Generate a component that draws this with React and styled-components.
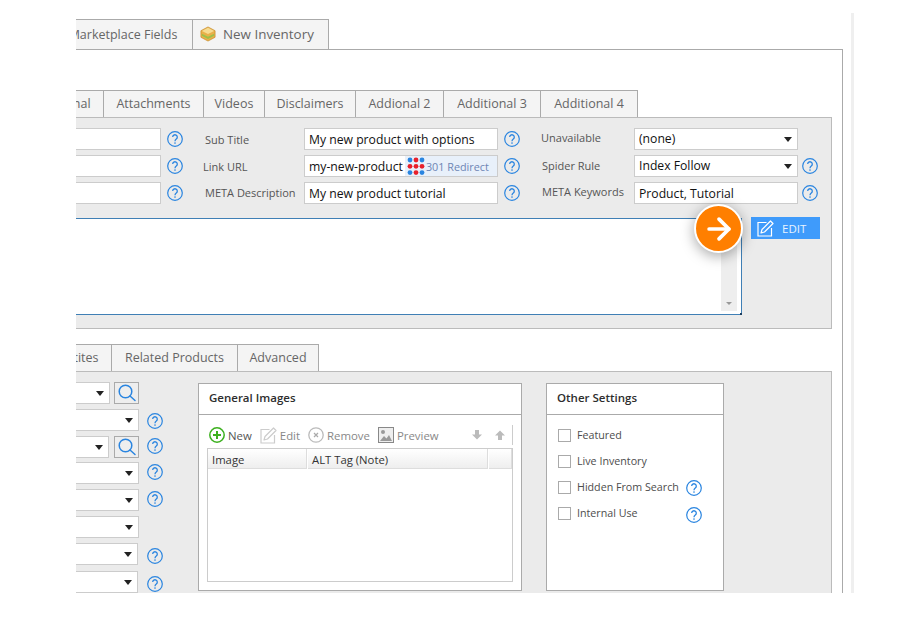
import React from 'react';
import styled, { createGlobalStyle } from 'styled-components';
import { ArrowRight } from 'lucide-react';

const GlobalStyle = createGlobalStyle`
    html, body {
        margin: 0;
        background: #fff;
    }
    body {
        font-family: "Open Sans", "Noto Sans", sans-serif;
        font-size: 12px;
    }
`;

const Page = styled.div`
    width: 900px;
    height: 620px;
    overflow: hidden;
`;

const Viewport = styled.div`
    display: flex;
    width: 778px;
    height: 593px;
    margin-left: 76px;
    overflow: hidden;
`;

const Main = styled.div`
    display: flex;
    flex-direction: column;
    flex: none;
    width: 767px;
    padding-top: 19px;
    box-sizing: border-box;
`;

const SideStrip = styled.div`
    flex: none;
    width: 3px;
    margin: 13px 0 0 8px;
    background: #efefef;
`;

const TabStrip = styled.div`
    display: flex;
    flex: none;
    height: ${p => p.$height}px;
    margin-left: ${p => p.$shift}px;
    margin-top: ${p => p.$top || 0}px;
`;

const Tab = styled.div`
    display: flex;
    align-items: center;
    justify-content: center;
    flex: none;
    width: ${p => p.$w}px;
    box-sizing: border-box;
    background: #f4f4f4;
    border-top: 1px solid #aaa;
    border-left: 1px solid #aaa;
    border-right: ${p => (p.$last ? '1px solid #aaa' : 'none')};
    color: #666;
    font-size: 12.5px;
    white-space: nowrap;
`;

const InnerTab = styled(Tab)`
    padding-bottom: 2px;
`;

const MarketplaceTab = styled(Tab)`
    padding-left: 2px;
`;

const InventoryTab = styled(Tab)`
    justify-content: flex-start;
    gap: 7px;
    padding: 0 0 2px 7px;
    font-size: 13.4px;
`;

const Body = styled.div`
    flex: 1;
    min-height: 0;
    padding-right: 10px;
    border-top: 1px solid #aaa;
    border-right: 1px solid #aaa;
`;

const Section = styled.div`
    margin-left: -10px;
`;

const Panel = styled.div`
    background: #ebebeb;
    border: 1px solid #bbb;
    padding: 10px 0 13px;
`;

const FormGrid = styled.div`
    display: grid;
    grid-template-columns: 94px 22px 121px 194px 22px 114px 164px 20px;
    grid-auto-rows: 22px;
    row-gap: 5px;
    align-items: center;
`;

const Label = styled.div`
    padding-left: ${p => p.$indent}px;
    margin-bottom: ${p => p.$up || 0}px;
    color: #555;
    font-size: 11px;
    white-space: nowrap;
`;

const Input = styled.div`
    display: flex;
    align-items: center;
    height: 22px;
    box-sizing: border-box;
    padding-left: 4px;
    background: #fff;
    border: 1px solid #ccc;
    color: #111;
    font-size: 12.2px;
    white-space: nowrap;
    overflow: hidden;
`;

const RedirectBadge = styled.div`
    display: flex;
    align-items: center;
    align-self: stretch;
    margin-left: 2px;
    padding-left: 2px;
    flex: 1;
    gap: 1px;
    background: #e8f0fa;
    color: #6e86b5;
    font-size: 10.8px;
`;

const SelectBox = styled.div`
    display: flex;
    align-items: center;
    justify-content: space-between;
    height: 22px;
    width: ${p => (p.$w ? `${p.$w}px` : 'auto')};
    box-sizing: border-box;
    padding: 0 5px 2px 4px;
    background: #fff;
    border: 1px solid #ccc;
    color: #111;
    font-size: 12.2px;
    white-space: nowrap;
`;

const Caret = styled.span`
    flex: none;
    width: 0;
    height: 0;
    margin-top: 2px;
    border-left: 4px solid transparent;
    border-right: 4px solid transparent;
    border-top: 5px solid #222;
`;

const HelpWrap = styled.span`
    display: flex;
    justify-self: end;
    margin-top: ${p => p.$drop || 0}px;
    margin-bottom: ${p => p.$lift || 0}px;
`;

const EditorRow = styled.div`
    display: flex;
    align-items: flex-start;
    margin-top: 14px;
`;

const Editor = styled.div`
    position: relative;
    display: flex;
    justify-content: flex-end;
    flex: none;
    width: 675px;
    height: 97px;
    box-sizing: border-box;
    padding: 1px 4px 3px 0;
    background: #fff;
    border: 1px solid #3f7fb5;

    &::after {
        content: '';
        position: absolute;
        right: -1px;
        bottom: -1px;
        width: 2px;
        height: 2px;
        background: #1c3f60;
    }
`;

const ScrollBar = styled.div`
    display: flex;
    align-items: flex-end;
    justify-content: center;
    width: 16px;
    padding-bottom: 6px;
    box-sizing: border-box;
    background: #eee;
`;

const ScrollArrow = styled.span`
    width: 0;
    height: 0;
    border-left: 3px solid transparent;
    border-right: 3px solid transparent;
    border-top: 3px solid #999;
`;

const GoBadge = styled.div`
    position: absolute;
    top: -15px;
    right: -2px;
    display: flex;
    align-items: center;
    justify-content: center;
    width: 49px;
    height: 49px;
    box-sizing: border-box;
    border: 2px solid #fff;
    border-radius: 50%;
    background: #ff7f00;
    color: #fff;
    box-shadow: 0 3px 14px rgba(0, 0, 0, 0.35);
`;

const EditButton = styled.div`
    display: flex;
    align-items: center;
    gap: 8px;
    width: 69px;
    height: 22px;
    box-sizing: border-box;
    margin: -1px 0 0 9px;
    padding-left: 6px;
    background: #3f9bfb;
    color: #e8f3ff;
    font-size: 11.5px;
`;

const BottomRow = styled.div`
    display: flex;
    align-items: flex-start;
`;

const LeftColumn = styled.div`
    flex: none;
    width: 96px;
`;

const LeftRow = styled.div`
    display: grid;
    grid-template-columns: 72px 24px;
    align-items: center;
    height: 22px;
    margin-top: ${p => p.$gap}px;
`;

const SelectCell = styled.div`
    display: flex;
    justify-content: space-between;
`;

const SearchButton = styled.div`
    display: flex;
    align-items: center;
    justify-content: center;
    width: 25px;
    height: 22px;
    box-sizing: border-box;
    background: #eee;
    border: 1px solid #aaa;
`;

const Card = styled.div`
    flex: none;
    width: ${p => p.$w}px;
    height: 208px;
    box-sizing: border-box;
    margin: 1px 0 0 ${p => p.$left}px;
    background: #fff;
    border: 1px solid #aaa;
`;

const CardTitle = styled.div`
    display: flex;
    align-items: center;
    height: 31px;
    box-sizing: border-box;
    padding: 0 0 3px 10px;
    border-bottom: 1px solid #aaa;
    color: #2d2d2d;
    font-size: 11.5px;
    font-weight: 600;
`;

const CardBody = styled.div`
    padding: 10px 8px 0;
`;

const Toolbar = styled.div`
    display: flex;
    align-items: center;
    gap: 8px;
    height: 20px;
    width: 306px;
    margin-bottom: 3px;
    padding-left: 2px;
    box-sizing: border-box;
    border-right: 1px solid #ccc;
`;

const Tool = styled.div`
    display: flex;
    align-items: center;
    gap: 3px;
    color: ${p => (p.$on ? '#555' : '#888')};
    font-size: 11.4px;
`;

const MoveButtons = styled.div`
    display: flex;
    gap: 13px;
    margin-left: auto;
    margin-right: 7px;
`;

const ImageGrid = styled.div`
    width: 306px;
    height: 134px;
    box-sizing: border-box;
    border: 1px solid #ccc;
`;

const GridHead = styled.div`
    display: grid;
    grid-template-columns: 99px 180px 23px;
    column-gap: 1px;
    height: 20px;
`;

const GridCell = styled.div`
    display: flex;
    align-items: center;
    padding: 2px 0 0 4px;
    background: linear-gradient(#fff, #eee);
    border-bottom: 1px solid #ddd;
    border-right: 1px solid #ddd;
    color: #333;
    font-size: 11.3px;
`;

const CheckList = styled.div`
    display: grid;
    grid-auto-rows: 13px;
    row-gap: 13px;
    padding: 14px 21px 0 11px;
`;

const CheckRow = styled.div`
    display: grid;
    grid-template-columns: 13px minmax(0, 1fr) 16px;
    grid-template-rows: 13px;
    column-gap: 6px;
    align-items: center;
    color: #4d4d4d;
    font-size: 10.7px;
    white-space: nowrap;
`;

const CheckLabel = styled.span`
    margin-top: ${p => p.$nudge || 0}px;
    margin-bottom: 1px;
`;

const CheckBox = styled.span`
    width: 13px;
    height: 13px;
    box-sizing: border-box;
    background: #fff;
    border: 1px solid #aaa;
`;

const HelpIcon = () => (
    <svg width="16" height="16" viewBox="0 0 16 16" fill="none" stroke="#2a85e0">
        <circle cx="8" cy="8" r="7.3" strokeWidth="1.2" />
        <path d="M5.7 6.1a2.3 2.3 0 1 1 3.6 1.9C8.5 8.6 8 9 8 10.2" strokeWidth="1.3" />
        <circle cx="8" cy="12.1" r="0.8" fill="#2a85e0" stroke="none" />
    </svg>
);

const BoxIcon = () => (
    <svg width="16" height="16" viewBox="0 0 17 17">
        <path d="M8.5 1 16 5v7l-7.5 4L1 12V5z" fill="#e9b04a" stroke="#c98f2c" strokeWidth="0.8" />
        <path d="M8.5 1.8 15 5.2 8.5 8.6 2 5.2z" fill="#f7dc92" />
        <path d="M2 8.2l6.5 3.3L15 8.2v2.2l-6.5 3.3L2 10.4z" fill="#9cc04a" />
    </svg>
);

const DotsIcon = () => {
    const colors = ['#2a85e0', '#e8202a', '#2a85e0', '#e8202a', '#e8202a', '#e8202a', '#2a85e0', '#e8202a', '#2a85e0'];
    return (
        <svg width="18" height="18" viewBox="0 0 18 18">
            {colors.map((c, i) => (
                <circle key={i} cx={3 + (i % 3) * 6} cy={3 + Math.floor(i / 3) * 6.3} r="2.4" fill={c} />
            ))}
        </svg>
    );
};

const SearchIcon = () => (
    <svg width="20" height="20" viewBox="0 0 20 20" fill="none" stroke="#2a85e0" strokeWidth="1.5">
        <circle cx="8.5" cy="8.5" r="6.3" />
        <path d="M13 13l5 4.5" strokeLinecap="round" />
    </svg>
);

const NewIcon = () => (
    <svg width="16" height="16" viewBox="0 0 16 16" fill="none" stroke="#3cb01e">
        <circle cx="8" cy="8" r="7.2" strokeWidth="1.5" />
        <path d="M8 4v8M4 8h8" strokeWidth="2" />
    </svg>
);

const PenIcon = ({ color }) => (
    <svg width="17" height="17" viewBox="0 0 17 17" fill="none" stroke={color} strokeWidth="1.2">
        <path d="M9.5 2.5H1v13.5h13.5V8" />
        <path d="M13.5 1 16 3.5 7.5 12l-3.5 1 1-3.5z" strokeLinejoin="round" />
    </svg>
);

const RemoveIcon = () => (
    <svg width="16" height="16" viewBox="0 0 16 16" fill="none" stroke="#bbb">
        <circle cx="8" cy="8" r="7.2" strokeWidth="1.3" />
        <path d="M6 6l4 4M10 6l-4 4" stroke="#aaa" strokeWidth="1.2" />
    </svg>
);

const PreviewIcon = () => (
    <svg width="16" height="16" viewBox="0 0 16 16">
        <rect x="0.5" y="0.5" width="15" height="15" fill="#eee" stroke="#888" />
        <circle cx="5" cy="5" r="2" fill="#999" />
        <path d="M2 14l4-5 2.5 2.5L11 8l3 6z" fill="#999" />
    </svg>
);

const MoveIcon = ({ up }) => (
    <svg width="10" height="10" viewBox="0 0 10 10" fill="#bbb">
        <path d={up ? 'M5 0.5 10 5.5H7V10H3V5.5H0z' : 'M5 9.5 10 4.5H7V0H3V4.5H0z'} />
    </svg>
);

const formRows = [
    { a: 22, la: 'Sub Title', b: 21, lb: 'Unavailable', upB: 4, value: 'My new product with options', select: '(none)' },
    { a: 20, la: 'Link URL', b: 22, lb: 'Spider Rule', upB: 2, value: 'my-new-product', select: 'Index Follow', help: true, redirect: true },
    { a: 22, la: 'META Description', upA: 2, b: 22, lb: 'META Keywords', upB: 4, value: 'My new product tutorial', text: 'Product, Tutorial', help: true },
];

const leftRows = [
    { gap: 0, w: 43, search: true },
    { gap: 5, w: 72, help: true, drop: 2 },
    { gap: 5, w: 42, search: true, help: true, lift: 2 },
    { gap: 4, w: 72, help: true, lift: 2 },
    { gap: 5, w: 72, help: true, lift: 2 },
    { gap: 5, w: 72 },
    { gap: 5, w: 71, help: true, drop: 4 },
    { gap: 6, w: 71, help: true, drop: 4 },
];

const App = () => (
    <Page>
        <GlobalStyle />
        <Viewport>
            <Main>
                <TabStrip $height={30} $shift={-25}>
                    <MarketplaceTab $w={141}>Marketplace Fields</MarketplaceTab>
                    <InventoryTab $w={137} $last>
                        <BoxIcon />
                        New Inventory
                    </InventoryTab>
                </TabStrip>
                <Body>
                    <TabStrip $height={27} $shift={-58} $top={40}>
                        <InnerTab $w={85}>Additional</InnerTab>
                        <InnerTab $w={100}>Attachments</InnerTab>
                        <InnerTab $w={61}>Videos</InnerTab>
                        <InnerTab $w={91}>Disclaimers</InnerTab>
                        <InnerTab $w={88}>Addional 2</InnerTab>
                        <InnerTab $w={97}>Additional 3</InnerTab>
                        <InnerTab $w={98} $last>Additional 4</InnerTab>
                    </TabStrip>
                    <Section>
                        <Panel>
                            <FormGrid>
                                {formRows.map(row => (
                                    <React.Fragment key={row.la}>
                                        <Input />
                                        <HelpWrap><HelpIcon /></HelpWrap>
                                        <Label $indent={row.a} $up={row.upA}>{row.la}</Label>
                                        <Input>
                                            {row.value}
                                            {row.redirect && (
                                                <RedirectBadge>
                                                    <DotsIcon />
                                                    301 Redirect
                                                </RedirectBadge>
                                            )}
                                        </Input>
                                        <HelpWrap><HelpIcon /></HelpWrap>
                                        <Label $indent={row.b} $up={row.upB}>{row.lb}</Label>
                                        {row.text ? (
                                            <Input>{row.text}</Input>
                                        ) : (
                                            <SelectBox>
                                                {row.select}
                                                <Caret />
                                            </SelectBox>
                                        )}
                                        {row.help ? <HelpWrap><HelpIcon /></HelpWrap> : <span />}
                                    </React.Fragment>
                                ))}
                            </FormGrid>
                            <EditorRow>
                                <Editor>
                                    <ScrollBar><ScrollArrow /></ScrollBar>
                                    <GoBadge><ArrowRight size={34} strokeWidth={2.6} /></GoBadge>
                                </Editor>
                                <EditButton>
                                    <PenIcon color="#fff" />
                                    EDIT
                                </EditButton>
                            </EditorRow>
                        </Panel>
                    </Section>
                    <TabStrip $height={27} $shift={-48} $top={15}>
                        <InnerTab $w={83}>Quantites</InnerTab>
                        <InnerTab $w={126}>Related Products</InnerTab>
                        <InnerTab $w={82} $last>Advanced</InnerTab>
                    </TabStrip>
                    <Section>
                        <Panel>
                            <BottomRow>
                                <LeftColumn>
                                    {leftRows.map((row, i) => (
                                        <LeftRow key={i} $gap={row.gap}>
                                            <SelectCell>
                                                <SelectBox $w={row.w}><span /><Caret /></SelectBox>
                                                {row.search && <SearchButton><SearchIcon /></SearchButton>}
                                            </SelectCell>
                                            {row.help ? <HelpWrap $drop={row.drop} $lift={row.lift}><HelpIcon /></HelpWrap> : <span />}
                                        </LeftRow>
                                    ))}
                                </LeftColumn>
                                <Card $w={324} $left={35}>
                                    <CardTitle>General Images</CardTitle>
                                    <CardBody>
                                        <Toolbar>
                                            <Tool $on><NewIcon />New</Tool>
                                            <Tool><PenIcon color="#ccc" />Edit</Tool>
                                            <Tool><RemoveIcon />Remove</Tool>
                                            <Tool><PreviewIcon />Preview</Tool>
                                            <MoveButtons>
                                                <MoveIcon />
                                                <MoveIcon up />
                                            </MoveButtons>
                                        </Toolbar>
                                        <ImageGrid>
                                            <GridHead>
                                                <GridCell>Image</GridCell>
                                                <GridCell>ALT Tag (Note)</GridCell>
                                                <GridCell />
                                            </GridHead>
                                        </ImageGrid>
                                    </CardBody>
                                </Card>
                                <Card $w={178} $left={24}>
                                    <CardTitle>Other Settings</CardTitle>
                                    <CheckList>
                                        <CheckRow><CheckBox /><CheckLabel>Featured</CheckLabel></CheckRow>
                                        <CheckRow><CheckBox /><CheckLabel>Live Inventory</CheckLabel></CheckRow>
                                        <CheckRow>
                                            <CheckBox />
                                            <CheckLabel>Hidden From Search</CheckLabel>
                                            <HelpWrap><HelpIcon /></HelpWrap>
                                        </CheckRow>
                                        <CheckRow>
                                            <CheckBox />
                                            <CheckLabel>Internal Use</CheckLabel>
                                            <HelpWrap $drop={3}><HelpIcon /></HelpWrap>
                                        </CheckRow>
                                    </CheckList>
                                </Card>
                            </BottomRow>
                        </Panel>
                    </Section>
                </Body>
            </Main>
            <SideStrip />
        </Viewport>
    </Page>
);

export default App;
